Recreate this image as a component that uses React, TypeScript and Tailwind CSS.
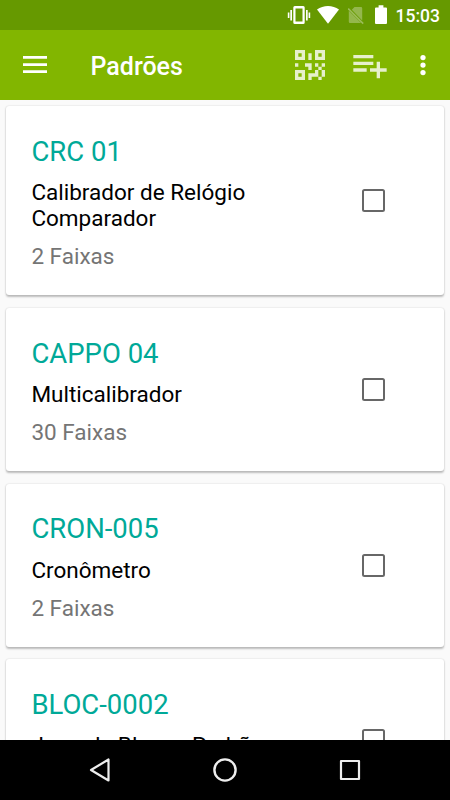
import { useState } from "react"

interface Standard { code: string; name: string; ranges: number }

const standards: Standard[] = [
  { code: "CRC 01", name: "Calibrador de Relógio Comparador", ranges: 2 },
  { code: "CAPPO 04", name: "Multicalibrador", ranges: 30 },
  { code: "CRON-005", name: "Cronômetro", ranges: 2 },
  { code: "BLOC-0002", name: "Jogo de Blocos Padrão", ranges: 1 },
]

function StatusBar() {
  return (
    <div className="flex h-[30px] shrink-0 items-center justify-end bg-[#669900] pr-2.5 text-white">
      {/* Vibrate */}
      <svg className="h-[30px] w-[24px]" viewBox="0 0 24 30" fill="currentColor">
        <path d="M.8 12.500h1.600v5.500H.8zM3.300 10H5v10.500H3.300zM21.600 12.500h1.600v5.500h-1.600zM19 10h1.700v10.500H19z" />
        <path fillRule="evenodd" d="M7.800 6h8.400q1.500 0 1.500 1.500v15q0 1.500-1.500 1.500H7.800q-1.500 0-1.500-1.500v-15Q6.300 6 7.800 6zm.700 2.500v13h7v-13z" />
      </svg>
      {/* Wifi */}
      <svg className="ml-1.5 h-[30px] w-[22px]" viewBox="0 0 22 30" fill="currentColor">
        <path d="M11 23.800L0 9.600C3.200 7.200 7 6 11 6s7.800 1.200 11 3.600z" />
      </svg>
      {/* No SIM */}
      <svg className="ml-[9px] h-[30px] w-[17px]" viewBox="0 0 17 30">
        <path d="M6.500 7H13q1.200 0 1.200 1.200v12.300L3.800 9.700zM.8 10.800L13 23H2q-1.200 0-1.200-1.200z" fill="#fff" fillOpacity=".3" />
        <path d="M.2 8.600l15 15" stroke="#fff" strokeOpacity=".35" strokeWidth="1.500" />
      </svg>
      {/* Battery */}
      <svg className="ml-[10px] h-[30px] w-[12px]" viewBox="0 0 12 30" fill="currentColor">
        <path d="M1 7.500h2.600V5.300h4.800v2.200H11q1 0 1 1V23q0 1-1 1H1q-1 0-1-1V8.500q0-1 1-1z" />
      </svg>
      <span className="ml-[9px] pt-0.5 text-[17.5px] leading-[30px] font-medium">15:03</span>
    </div>
  )
}

function Toolbar() {
  return (
    <header className="flex h-[70px] shrink-0 items-center bg-[#82b600] text-white">
      <button className="ml-[23px]" aria-label="Menu">
        <svg className="h-[18px] w-6" viewBox="0 0 24 18" fill="currentColor">
          <path d="M0 0h24v2.700H0zM0 7.200h24v2.700H0zM0 14.200h24v2.700H0z" />
        </svg>
      </button>
      <h1 className="ml-[43.5px] flex-1 pt-1 text-[25px] leading-[30px] font-medium">Padrões</h1>
      <button className="mr-5" aria-label="QR code">
        <svg className="size-10" viewBox="0 0 24 24" fill="#e6f0cc">
          <path d="M3,11H5V13H3V11M11,5H13V9H11V5M9,11H13V15H11V13H9V11M15,11H17V13H19V11H21V13H19V15H21V19H19V21H17V19H13V21H11V17H15V15H17V13H15V11M19,19V15H17V19H19M15,3H21V9H15V3M17,5V7H19V5H17M3,3H9V9H3V3M5,5V7H7V5H5M3,15H9V21H3V15M5,17V19H7V17H5Z" />
        </svg>
      </button>
      <button className="mr-[17.5px]" aria-label="Adicionar">
        <svg className="size-10" viewBox="0 0 24 24" fill="#e6f0cc">
          <path d="M14 10H2v2h12v-2zm0-4H2v2h12V6zm4 8v-4h-2v4h-4v2h4v4h2v-4h4v-2h-4zM2 16h8v-2H2v2z" />
        </svg>
      </button>
      <button className="mr-[12.5px]" aria-label="Mais opções">
        <svg className="size-[30px]" viewBox="0 0 24 24" fill="currentColor">
          <circle cx="12" cy="6" r="2.100" />
          <circle cx="12" cy="12" r="2.100" />
          <circle cx="12" cy="18" r="2.100" />
        </svg>
      </button>
    </header>
  )
}

function StandardCard({ item }: { item: Standard }) {
  const [checked, setChecked] = useState(false)

  return (
    <li className="flex shrink-0 items-center rounded-[3px] bg-white pt-[29.8px] pb-[26.1px] pl-[25.2px] shadow-[0_1.5px_2px_rgba(0,0,0,0.24),0_0_2px_rgba(0,0,0,0.12)]">
      <div className="w-[260px]">
        <h2 className="text-[27.5px] leading-[32px] text-[#00a998]">{item.code}</h2>
        <p className="mt-[11.2px] text-[22.5px] leading-[26px] text-black">{item.name}</p>
        <p className="mt-[12.2px] text-[22.5px] leading-[26px] text-[#757575]">{item.ranges} Faixas</p>
      </div>
      <button
        role="checkbox"
        aria-checked={checked}
        aria-label={item.code}
        onClick={() => setChecked(!checked)}
        className={`-mt-[4px] ml-[71px] size-[23px] rounded-[2.5px] border-2 border-[#676767] ${checked ? "bg-[#00a998]" : ""}`}
      />
    </li>
  )
}

function NavigationBar() {
  return (
    <nav className="flex h-[60px] shrink-0 items-center justify-center gap-[95px] bg-black text-[#eee]">
      <svg className="size-[30px]" viewBox="0 0 30 30" fill="none" stroke="currentColor" strokeWidth="2.200" strokeLinejoin="round">
        <path d="M6 15L23.500 4.500v21z" />
      </svg>
      <svg className="size-[30px]" viewBox="0 0 30 30" fill="none" stroke="currentColor" strokeWidth="2.400">
        <circle cx="15" cy="15" r="10.600" />
      </svg>
      <svg className="size-[30px]" viewBox="0 0 30 30" fill="none" stroke="currentColor" strokeWidth="2.200" strokeLinejoin="round">
        <path d="M6 6h18v18H6z" />
      </svg>
    </nav>
  )
}

export default function App() {
  return (
    <div className="flex h-screen w-full flex-col overflow-hidden bg-[#fafafa] font-[Roboto,sans-serif]">
      <StatusBar />
      <Toolbar />
      <ul className="flex min-h-0 flex-1 flex-col gap-[12.5px] overflow-hidden px-[6.2px] pt-[6px]">
        {standards.map((item) => (
          <StandardCard key={item.code} item={item} />
        ))}
      </ul>
      <NavigationBar />
    </div>
  )
}
